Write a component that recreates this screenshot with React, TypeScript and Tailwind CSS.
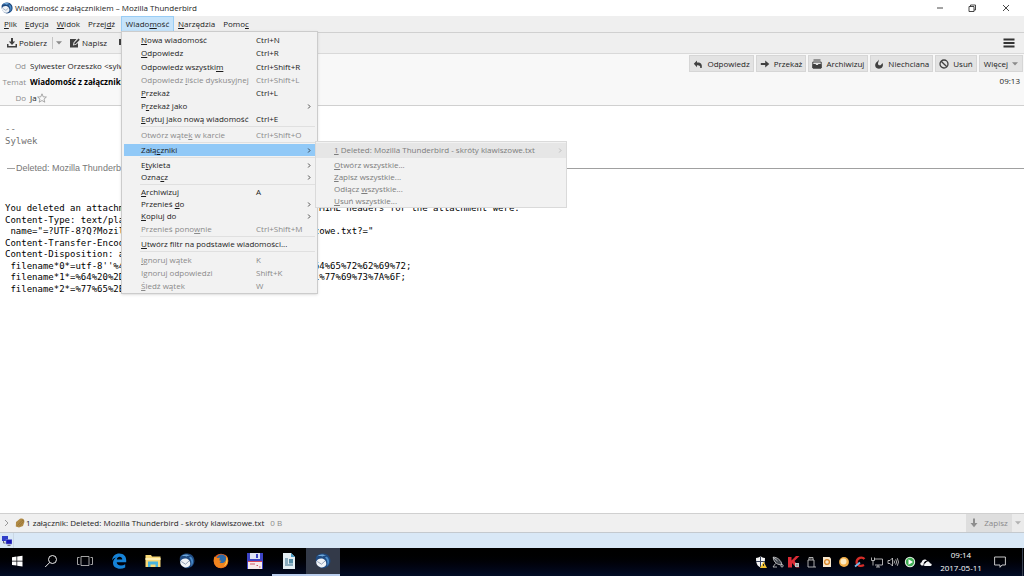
import type { ReactNode } from 'react';

type Item = {
    label: string;
    keys?: string;
    off?: boolean;
    sub?: boolean;
    active?: boolean;
    size?: string;
};

// "_" stands before the access key letter
const messageMenu: (Item | null)[] = [
    { label: '_Nowa wiadomość', keys: 'Ctrl+N' },
    { label: '_Odpowiedz', keys: 'Ctrl+R', size: 'h-[14px]' },
    { label: 'Odpowiedz wszystki_m', keys: 'Ctrl+Shift+R' },
    { label: 'Odpowiedz _liście dyskusyjnej', keys: 'Ctrl+Shift+L', off: true },
    { label: '_Przekaż', keys: 'Ctrl+L', size: 'h-[14px]' },
    { label: 'P_rzekaż jako', sub: true, size: 'h-3' },
    { label: '_Edytuj jako nową wiadomość', keys: 'Ctrl+E' },
    null,
    { label: 'Otwórz wąte_k w karcie', keys: 'Ctrl+Shift+O', off: true },
    null,
    { label: 'Załą_czniki', sub: true, active: true, size: 'h-3' },
    null,
    { label: 'E_tykieta', sub: true, size: 'h-3' },
    { label: 'Ozna_cz', sub: true, size: 'h-3' },
    null,
    { label: '_Archiwizuj', keys: 'A', size: 'h-3' },
    { label: 'Przenieś _do', sub: true, size: 'h-3' },
    { label: '_Kopiuj do', sub: true, size: 'h-3' },
    { label: 'Przenieś pono_wnie', keys: 'Ctrl+Shift+M', off: true },
    null,
    { label: '_Utwórz filtr na podstawie wiadomości...', size: 'h-3' },
    null,
    { label: '_Ignoruj wątek', keys: 'K', off: true },
    { label: 'Ignoruj odpowiedzi', keys: 'Shift+K', off: true },
    { label: '_Śledź wątek', keys: 'W', off: true },
];

const headerLines = [
    'You deleted an attachment from this message. The original MIME headers for the attachment were:',
    'Content-Type: text/plain; charset=UTF-8;',
    ' name="=?UTF-8?Q?Mozilla_Thunderbird_-_skr=c3=b3ty_klawiszowe.txt?="',
    'Content-Transfer-Encoding: base64',
    'Content-Disposition: attachment;',
    " filename*0*=utf-8''%4D%6F%7A%69%6C%6C%61%20%54%68%75%6E%64%65%72%62%69%72;",
    ' filename*1*=%64%20%2D%20%73%6B%72%C3%B3%74%79%20%6B%6C%61%77%69%73%7A%6F;',
    ' filename*2*=%77%65%2E%74%78%74',
];

function Label({ text }: { text: string }) {
    const i = text.indexOf('_');
    if (i < 0) return <>{text}</>;
    return (
        <>
            {text.slice(0, i)}
            <u className="underline-offset-1">{text[i + 1]}</u>
            {text.slice(i + 2)}
        </>
    );
}

function Chevron() {
    return (
        <svg viewBox="0 0 4 6" className="h-[5px] w-1" fill="none" stroke="currentColor" strokeWidth="0.9">
            <path d="M1 .6 3.2 3 1 5.4" />
        </svg>
    );
}

function Caret() {
    return (
        <svg viewBox="0 0 6 4" className="h-1 w-1.5" fill="#8a8a8a">
            <path d="M0 .3h6L3 3.6z" />
        </svg>
    );
}

function ThunderbirdIcon({ className }: { className: string }) {
    return (
        <svg viewBox="0 0 16 16" className={className}>
            <path d="M.8 5C1.500 2 5 .3 8.500.6c4.500.3 7.300 3.900 6.900 8-.4 3.700-3.400 6.600-7.400 6.600-4 0-7.600-4-7.200-10.200z" fill="#1f4a80" />
            <path d="M2 3.500C4.500.8 9 .8 11.500 3.200c-2-.6-3.300-.3-4 .3C5.500 2.900 3.500 3 2 3.500z" fill="#6fa9db" />
            <path d="M12 3.800c2.500 2.500 2.800 6.500.3 9.400.4-3.500.3-6.500-2.300-8.700.7-.6 1.300-.8 2-.7z" fill="#4a8cc9" />
            <path d="M1.300 8.500c1-2.500 4-3.700 6.700-2.700 2.500 1 3.700 3.700 3.100 6.200-1 2-3.600 2.800-5.800 2.200C2.500 13.300.8 11 1.300 8.500z" fill="#f0f3f7" />
            <path d="m2.300 8.500 4.200 2.700L10 8" fill="none" stroke="#93a3b8" strokeWidth="1" />
        </svg>
    );
}

function PaneButton({ icon, children }: { icon: ReactNode; children: ReactNode }) {
    return (
        <button type="button" className="flex h-[17px] items-center gap-1 border border-[#d6d6d6] bg-[#e3e3e3] px-[3px]">
            {icon}
            {children}
        </button>
    );
}

function Task({ label, className = '', children }: { label: string; className?: string; children: ReactNode }) {
    return (
        <button type="button" aria-label={label} className={`flex h-full w-[34px] items-center justify-center border-b-2 ${className || 'border-transparent'}`}>
            {children}
        </button>
    );
}

function MessageMenu() {
    return (
        <div role="menu" className="absolute top-[15px] left-0 z-20 w-[197px] border border-[#cccccc] bg-[#f2f2f2] px-0.5 py-px shadow-sm">
            {messageMenu.map((item, i) =>
                item === null ? (
                    <div key={i} className="flex h-[3px] items-center pl-4">
                        <hr className="w-full border-[#e0e0e0]" />
                    </div>
                ) : (
                    <button
                        key={i}
                        type="button"
                        role="menuitem"
                        className={`flex w-full items-center pr-1 pl-[17px] ${item.size ?? 'h-[13px]'} ${item.active ? 'bg-[#91c9f7]' : ''} ${item.off ? 'text-[#8a8a8a]' : 'text-[#1c1c1c]'}`}
                    >
                        <span className="w-[115px] text-left"><Label text={item.label} /></span>
                        <span className="grow text-left">{item.keys}</span>
                        {item.sub && <Chevron />}
                    </button>
                ),
            )}
            <div role="menu" className="absolute top-[109px] left-[193px] w-[252px] border border-[#dadada] bg-[#f2f2f2] pt-px text-[#7c7c7c]">
                <button type="button" role="menuitem" className="flex h-[14px] w-full items-center justify-between bg-[#e6e6e6] pr-1 pl-[18px]">
                    <span><Label text="_1 Deleted: Mozilla Thunderbird - skróty klawiszowe.txt" /></span>
                    <span className="text-[#b0b0b0]"><Chevron /></span>
                </button>
                <hr className="mb-px border-[#e6e6e6]" />
                {['_Otwórz wszystkie...', '_Zapisz wszystkie...', 'Odłącz _wszystkie...', '_Usuń wszystkie...'].map((label) => (
                    <button key={label} type="button" role="menuitem" className="flex h-3 w-full items-center pl-[18px]">
                        <span><Label text={label} /></span>
                    </button>
                ))}
            </div>
        </div>
    );
}

function MenuBar() {
    return (
        <nav className="flex h-[17px] items-stretch border-b border-[#d0d0d0] bg-[#efefef]">
            {['_Plik', '_Edycja', '_Widok', 'Przej_dź'].map((label) => (
                <button key={label} type="button" className="px-1"><Label text={label} /></button>
            ))}
            <div className="relative ml-0.5 flex">
                <button type="button" className="w-[53px] border border-[#99cdf5] bg-[#c5e3fa]"><Label text="Wiado_mość" /></button>
                <MessageMenu />
            </div>
            {['_Narzędzia', 'Pomo_c'].map((label) => (
                <button key={label} type="button" className="px-1"><Label text={label} /></button>
            ))}
        </nav>
    );
}

function Tray() {
    return (
        <div className="flex w-[177px] items-center justify-between">
            <svg viewBox="0 0 12 12" className="size-3">
                <path d="M1 2c2 0 3-1 4.500-1.500C7 1 8 2 10 2c0 5-1 8-4.500 9.500C2 10 1 7 1 2z" fill="#f4f4f4" />
                <path d="M5.500 1v10M1 5.500h9" stroke="#38435c" strokeWidth="1" />
                <path d="M8.500 5.500 12 12H5z" fill="#f2c230" />
                <path d="M8.500 8v2" stroke="#333" />
            </svg>
            <svg viewBox="0 0 12 12" className="size-3" fill="none" stroke="#d5d5d5" strokeWidth=".8">
                <path d="M1.200 1.200C5 1 9.500 4.500 9.800 8.500 6 9.500 1.500 6.500 1.200 1.200z" fill="#41464e" />
                <path d="M1.200 1.200 5.500 5M3.500 7.500 1 11h4" />
                <circle cx="10" cy="9.800" r="1.200" />
            </svg>
            <svg viewBox="0 0 12 12" className="size-3">
                <path d="M0 1h3.500v3.500L8 0h3.500L6.500 5l5 6.500H8L4 7v4.500H0z" fill="#dc2b35" />
                <path d="M7 7h4v4H7z" fill="#bdc5c4" /><path d="M8.500 8v2l1.500-1z" fill="#526360" />
            </svg>
            <svg viewBox="0 0 12 12" className="size-3" fill="none" stroke="#d4d4d4" strokeWidth=".8">
                <path d="M4 4V1.500h4V4M3 4h6v7H3zM5.500 2.500v.7M6.800 2.500v.7M9 11h2" />
            </svg>
            <svg viewBox="0 0 12 12" className="size-3">
                <path d="M2 1h6.500L10 2.500V11H2z" fill="#f7e6cc" /><circle cx="6" cy="6" r="2.400" fill="none" stroke="#d98525" strokeWidth="1.300" />
            </svg>
            <svg viewBox="0 0 12 12" className="size-3">
                <circle cx="6" cy="6" r="4.900" fill="#f4b04a" /><circle cx="5.500" cy="5.500" r="3" fill="#fdeac2" />
            </svg>
            <svg viewBox="0 0 12 12" className="size-3" fill="none">
                <path d="M10.500 3C8 .2 3 1.800 2.600 6c0 3.500 4 5 7.400 3" stroke="#d62d28" strokeWidth="2.300" />
                <path d="m1 10.500 5-4" stroke="#75b8e8" strokeWidth="1.800" />
            </svg>
            <svg viewBox="0 0 12 12" className="size-3" fill="none" stroke="#d8d8d8" strokeWidth=".8">
                <path d="M3 3h8.500v6H4M7 9v2M5 11h4M.5 1.500v3h3v-3M2 4.500v5" />
            </svg>
            <svg viewBox="0 0 12 12" className="size-3" fill="none" stroke="#d8d8d8" strokeWidth=".8">
                <path d="M1 4.500h2L5.500 2v8L3 7.500H1zM7 4.500q1 1.500 0 3M8.700 3.300q1.800 2.700 0 5.400M10.300 2.200q2.400 3.800 0 7.600" />
            </svg>
            <svg viewBox="0 0 12 12" className="size-3">
                <circle cx="6" cy="6" r="5.200" fill="#e5efe5" /><circle cx="6" cy="6" r="4.200" fill="#3fae54" /><path d="M4.500 3.200v5.600L9 6z" fill="#fff" />
            </svg>
            <svg viewBox="0 0 12 12" className="size-3" fill="#f5f5f5">
                <path d="M1.800 9.500C-.3 9 0 6.500 1.700 6.200 2 3.500 5.500 2.500 7 4.800 4.500 4.800 3.500 6.500 3.500 9.500zM4.300 10c-.5-1.500.3-2.800 1.500-2.900.5-2 3.700-2.100 4.100.2 2.300.2 2.300 2.700.6 2.700z" />
            </svg>
        </div>
    );
}

export default function App() {
    return (
        <div className="flex min-h-screen flex-col bg-white text-[8px] leading-[12px] whitespace-nowrap text-[#1c1c1c] [font-family:'Open_Sans','Noto_Sans',sans-serif]">
            <header className="flex h-4 items-center">
                <ThunderbirdIcon className="ml-px size-3" />
                <h1 className="ml-0.5 grow">Wiadomość z załącznikiem – Mozilla Thunderbird</h1>
                <div className="flex">
                    <button type="button" aria-label="Minimalizuj" className="flex w-8 justify-center">
                        <svg viewBox="0 0 8 8" className="size-2" stroke="#333" strokeWidth=".9"><path d="M1 4h6" /></svg>
                    </button>
                    <button type="button" aria-label="Przywróć" className="flex w-8 justify-center">
                        <svg viewBox="0 0 8 8" className="size-2" fill="none" stroke="#333" strokeWidth=".9"><path d="M1 2.500h5v5H1zM2.500 2.500V1h5v5H6" /></svg>
                    </button>
                    <button type="button" aria-label="Zamknij" className="flex w-9 justify-center">
                        <svg viewBox="0 0 8 8" className="size-2" stroke="#333" strokeWidth=".9"><path d="m1 1 6 6M7 1 1 7" /></svg>
                    </button>
                </div>
            </header>

            <MenuBar />

            <div className="flex h-[21px] items-center border-b border-[#d9d9d9] bg-[#efefef] pr-[9px] pl-[7px]">
                <button type="button" className="flex items-center gap-0.5">
                    <svg viewBox="0 0 10 10" className="size-2.5" fill="#404040">
                        <path d="M4 0h2v3.500h2.200L5 7 1.800 3.500H4zM0 6h1.500v2h7V6H10v3.500H0z" />
                    </svg>
                    Pobierz
                </button>
                <button type="button" aria-label="Pobierz z konta" className="ml-[5px] flex h-3 items-center border-l border-[#c4c4c4] pl-[3px]"><Caret /></button>
                <button type="button" className="ml-2 flex items-center gap-0.5">
                    <svg viewBox="0 0 10 10" className="size-2.5" fill="#404040">
                        <path d="M0 1h6.500L3.500 4.500 3 7.500l3-.7L8 5v4.500H0z" /><path d="m4 6.500.5-1.800L8.500.5l1.300 1.200-4 4.300z" />
                    </svg>
                    Napisz
                </button>
                <button type="button" className="ml-3 flex items-center gap-0.5">
                    <svg viewBox="0 0 10 8" className="h-2 w-2.5" fill="#404040"><path d="M0 0h10v6H4L2 8V6H0z" /></svg>
                    Czat
                </button>
                <button type="button" aria-label="Menu programu" className="ml-auto">
                    <svg viewBox="0 0 12 10" className="h-2.5 w-3" stroke="#333" strokeWidth="1.800"><path d="M.5 1.500h11M.5 5h11M.5 8.500h11" /></svg>
                </button>
            </div>

            <section className="flex h-[52px] justify-between border-b border-[#d0d0d0] bg-[#f8f8f8]">
                <dl className="grid grid-cols-[26px_1fr] content-start gap-x-1 gap-y-1 pt-1.5">
                    <dt className="text-right text-[#8c8c8c]">Od</dt>
                    <dd>Sylwester Orzeszko &lt;sylwester@orzeszko.pl&gt;</dd>
                    <dt className="text-right text-[#8c8c8c]">Temat</dt>
                    <dd className="font-bold text-black">Wiadomość z załącznikiem</dd>
                    <dt className="text-right text-[#8c8c8c]">Do</dt>
                    <dd className="flex items-center">
                        Ja
                        <svg viewBox="0 0 10 10" className="size-2.5" fill="none" stroke="#888" strokeWidth=".7"><path d="m5 .8 1.200 3 3.200.2L7 6.100l.8 3.100L5 7.500 2.200 9.200 3 6.100.6 4l3.200-.2z" /></svg>
                    </dd>
                </dl>
                <div className="flex flex-col items-end gap-[3px] pt-px pr-px">
                    <div className="flex gap-0.5">
                        <PaneButton icon={<svg viewBox="0 0 10 10" className="size-2.5" fill="#404040"><path d="M4 1.500v2c3.500-.3 5.500 1.500 4.700 5.500H7.200c.4-2-.7-3-3.200-2.800v2L.8 4.800z" /></svg>}>Odpowiedz</PaneButton>
                        <PaneButton icon={<svg viewBox="0 0 10 10" className="size-2.5" fill="#404040"><path d="M.8 4h4.400V1.500L9.300 5 5.200 8.500V6H.8z" /></svg>}>Przekaż</PaneButton>
                        <PaneButton icon={<svg viewBox="0 0 10 10" className="size-2.5" fill="none" stroke="#404040"><path d="M1.500 1h7M.8 3h8.400v6H.8z" /><path d="M1 5.500h2.500L5 7l1.500-1.500H9V9H1z" fill="#404040" /></svg>}>Archiwizuj</PaneButton>
                        <PaneButton icon={<svg viewBox="0 0 10 10" className="size-2.5" fill="#404040"><path d="M4.800.4C5 2.500 3.800 3.500 4 5c.3 1.600 2.500 1.700 3.300.4L8.500 4c1.300 3-.4 5.700-3.500 5.700C1.200 9.700.2 6 2.200 3.500 3 2.500 4.300 2 4.800.4z" /></svg>}>Niechciana</PaneButton>
                        <PaneButton icon={<svg viewBox="0 0 10 10" className="size-2.5" fill="none" stroke="#404040" strokeWidth="1.300"><circle cx="5" cy="5" r="4" /><path d="m2.200 2.200 5.600 5.600" /></svg>}>Usuń</PaneButton>
                        <button type="button" className="flex h-[17px] items-center gap-1 border border-[#d6d6d6] bg-[#e3e3e3] px-1">Więcej <Caret /></button>
                    </div>
                    <time className="pr-[3px]">09:13</time>
                </div>
            </section>

            <main className="grow text-[9px] [font-family:'DejaVu_Sans_Mono',monospace]">
                <pre className="pt-[17px] pl-[5px] leading-[12px] text-[#707070] [font-family:inherit]">{'--\nSylwek'}</pre>
                <div className="mt-[15px] flex items-center pl-[7px] text-[#777] [font-family:'Liberation_Sans',sans-serif]">
                    <hr className="w-2 border-[#a0a0a0]" />
                    <h2 className="px-px">Deleted: Mozilla Thunderbird - skróty klawiszowe.txt</h2>
                    <hr className="grow border-[#a0a0a0]" />
                </div>
                <pre className="mt-7 grid h-[92px] auto-rows-fr pl-[5px] leading-[12px] text-black [font-family:inherit]">
                    {headerLines.map((line) => <span key={line}>{line}</span>)}
                </pre>
            </main>

            <section className="flex h-[19px] items-center border-t border-[#d0d0d0] bg-[#f0f0f0] pl-1">
                <button type="button" aria-label="Pokaż załączniki" className="text-[#999]">
                    <svg viewBox="0 0 5 8" className="h-2 w-[5px]" fill="none" stroke="currentColor"><path d="m1 1 3 3-3 3" /></svg>
                </button>
                <svg viewBox="0 0 10 10" className="ml-1.5 size-2.5">
                    <path d="M1 4 5 .8c3-1.200 5 1 4.200 3.700L8 8 4 9.500.8 8.500z" fill="#b08a45" />
                    <path d="m2.500 7.500 4.500-5c1-.8 2 .3 1.300 1.200L4.500 8" fill="none" stroke="#8a6a30" strokeWidth=".6" />
                </svg>
                <span className="ml-px">1 załącznik: Deleted: Mozilla Thunderbird - skróty klawiszowe.txt</span>
                <span className="ml-1.5 text-[#8c8c8c]">0 B</span>
                <div className="ml-auto flex h-[18px] text-[#8a8a8a]">
                    <button type="button" className="flex w-[46px] items-center justify-center gap-1.5 bg-[#dedede]">
                        <svg viewBox="0 0 8 10" className="h-2.5 w-2" fill="#8e8e8e"><path d="M3 .5h2V5h2.500L4 9.200.5 5H3z" /></svg>
                        Zapisz
                    </button>
                    <button type="button" aria-label="Więcej opcji zapisu" className="flex w-3 items-center justify-center bg-[#e8e8e8] opacity-60"><Caret /></button>
                </div>
            </section>

            <div className="flex h-4 items-center border-t border-[#c4c9ce] bg-[#d9e8f6]">
                <div className="flex h-full w-3.5 items-center justify-center border-r border-[#cbd8e4]">
                    <svg viewBox="0 0 10 10" className="size-2.5">
                        <path d="M0 0h6v5H0z" fill="#2f3fc9" /><path d="M1.500 5v2h2" stroke="#667" fill="none" />
                        <path d="M4 3.500h6V8H4z" fill="#1717b5" stroke="#8993d8" strokeWidth=".5" /><path d="M5.500 9.300h3" stroke="#556" />
                    </svg>
                </div>
            </div>

            <footer className="flex h-7 items-center justify-between bg-linear-to-b from-black to-[#020d26] text-white">
                <div className="flex h-full">
                    <Task label="Start">
                        <svg viewBox="0 0 12 12" className="size-3" fill="#fff"><path d="M1 2.200 5.500 1.500v4.200H1zM6.200 1.400 11.500.7v5H6.200zM1 6.400h4.500v4.200L1 9.900zM6.200 6.400h5.300v5l-5.300-.7z" /></svg>
                    </Task>
                    <Task label="Szukaj">
                        <svg viewBox="0 0 14 14" className="size-3.5" fill="none" stroke="#eee"><circle cx="8.500" cy="5.500" r="4" /><path d="m5.700 8.500-4.500 4.500" /></svg>
                    </Task>
                    <Task label="Widok zadań">
                        <svg viewBox="0 0 16 12" className="h-3 w-4" fill="none" stroke="#ccc" strokeWidth=".8"><path d="M4 1.500h8v9H4zM2.500 2.500h-2v7h2M13.500 2.500h2v7h-2" /></svg>
                    </Task>
                    <Task label="Edge">
                        <svg viewBox="0 0 16 16" className="size-4" fill="#1683d8"><path d="M1 7.500C1.500 3 4.500.5 8.300.5c4.400 0 7 3 6.900 6.700v2.100H5.700c.3 3.600 5.300 4 8.500 2v3.200C8.500 17.500 1.500 15 2 9.500 2.200 7 3.800 5.200 6 4.300 3.800 4.600 2 5.800 1 7.500zM5.800 6.500h5.500C11.200 2.900 6.200 2.900 5.800 6.500z" /></svg>
                    </Task>
                    <Task label="Eksplorator plików">
                        <svg viewBox="0 0 16 14" className="h-3.5 w-4"><path d="M.5 1H6l1 1.500h8.500V13H.5z" fill="#f7d877" /><path d="M.5 4h15v2H.5z" fill="#fff0b3" /><path d="M3 7.500h10V13h-2.500v-2.500h-5V13H3z" fill="#48b4de" /></svg>
                    </Task>
                    <Task label="Thunderbird"><ThunderbirdIcon className="size-4" /></Task>
                    <Task label="Firefox">
                        <svg viewBox="0 0 16 16" className="size-4">
                            <circle cx="8" cy="8" r="7.300" fill="#e8601c" /><circle cx="8.500" cy="6.500" r="5" fill="#2d6ba8" />
                            <path d="M1.500 3.500 4 5l3-.2-.8 2.400 2.300.8-2 1.200c2 1.800 5 .8 6.300-2C14 4 12.500 2.300 11.500 1.200 15 3 16 7 14.500 10.500 12 16 4 16.500 1.500 11 .4 8.500.5 5.500 1.500 3.500z" fill="#f0841f" />
                            <path d="M13.500 4c2 4 .5 8-3 9.500 2-2 3.500-5 3-9.500z" fill="#ffd34d" />
                        </svg>
                    </Task>
                    <Task label="Total Commander">
                        <svg viewBox="0 0 16 16" className="size-4"><path d="M0 0h16v16H0z" fill="#3c44c5" /><path d="M3 0h10v6H3z" fill="#dfe3f5" /><path d="M9 1h2v4H9z" fill="#3c44c5" /><path d="M1 8h14v8H1z" fill="#f6ecec" /><path d="M1 8.500h14" stroke="#d8485a" /><path d="M3 11h5M9.500 12.500H11M12 14h1.500" stroke="#d05c68" /></svg>
                    </Task>
                    <Task label="Writer" className="border-[#b9cdec]">
                        <svg viewBox="0 0 14 16" className="h-4 w-3.5"><path d="M1 0h8l4 4v12H1z" fill="#e4eef3" /><path d="M9 0v4h4z" fill="#4b9cc4" /><path d="M3 6h3M3 8h3M3 10h3M3 12h8" stroke="#326b89" /><path d="M7 6h4v4.500H7z" fill="#548ca5" /></svg>
                    </Task>
                    <Task label="Thunderbird – Wiadomość" className="border-[#b9cdec] bg-[#333a49]"><ThunderbirdIcon className="size-4" /></Task>
                </div>
                <div className="flex h-full items-center">
                    <Tray />
                    <div className="ml-1 w-[50px] pb-0.5 text-center leading-[13px]">
                        <div>09:14</div>
                        <div>2017-05-11</div>
                    </div>
                    <button type="button" aria-label="Centrum akcji" className="mr-4 ml-2">
                        <svg viewBox="0 0 12 12" className="size-3" fill="none" stroke="#ddd" strokeWidth=".9"><path d="M.6 1h10.800v8H8l-2 2.300V9H.6z" /></svg>
                    </button>
                    <div className="h-full w-0.5 border-l border-[#394252]" />
                </div>
            </footer>
        </div>
    );
}
